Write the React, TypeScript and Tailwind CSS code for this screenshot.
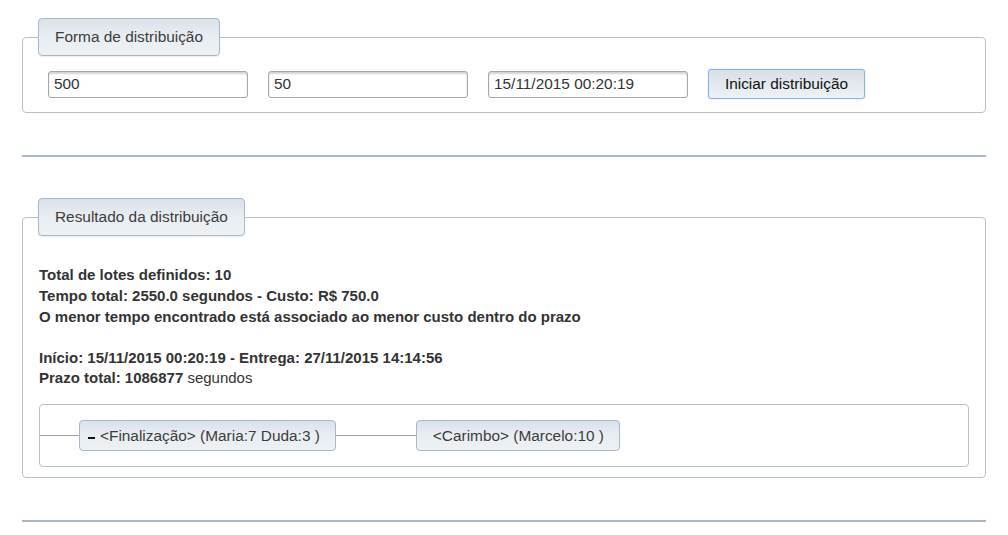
const font = { fontFamily: '"Liberation Sans", Arial, sans-serif' };

function Legend({ children }: { children: React.ReactNode }) {
  return (
    <legend className="ml-[15px] h-[38px] rounded-[4px] border border-[#a9b7c6] bg-gradient-to-b from-[#d9e1ea] via-[#e9eef2] to-[#edf1f4] px-[16px] text-[15.4px] leading-[36px] text-[#3c3c3c] shadow-[0_1px_1px_rgba(0,0,0,0.08)]">
      {children}
    </legend>
  );
}

function TextInput({ value }: { value: string }) {
  return (
    <input
      readOnly
      value={value}
      className="h-[27px] w-[200px] rounded-[3px] border border-[#a8a8a8] bg-white px-[5px] text-[15.4px] text-[#333] shadow-[inset_0_2px_2px_rgba(0,0,0,0.18)] outline-none"
    />
  );
}

function Node({ children, className = "" }: { children: React.ReactNode; className?: string }) {
  return (
    <div
      className={`flex h-[31px] items-center rounded-[4px] border border-[#a9b7c6] bg-gradient-to-b from-[#d9e1ea] via-[#e9eef2] to-[#edf1f4] pr-[15px] text-[15.4px] text-[#3c3c3c] ${className}`}
    >
      {children}
    </div>
  );
}

export default function App() {
  return (
    <div className="min-h-[535px] bg-white px-[22px] pt-[18px]" style={font}>
      <fieldset className="rounded-[4px] border border-[#b3c0cc] px-0 pb-[13px]">
        <Legend>Forma de distribuição</Legend>
        <div className="flex items-center gap-[20px] pl-[25px] pt-[13px]">
          <TextInput value="500" />
          <TextInput value="50" />
          <TextInput value="15/11/2015 00:20:19" />
          <button className="h-[30px] w-[157px] rounded-[3px] border border-[#88b0e6] bg-gradient-to-b from-[#d7dfe8] to-[#eef2f5] text-[15.4px] text-[#111] shadow-[0_0_1px_rgba(90,140,220,0.7)]">
            Iniciar distribuição
          </button>
        </div>
      </fieldset>

      <hr className="mt-[42px] border-0 border-t-2 border-[#a9b8c7]" />

      <fieldset className="mt-[41px] rounded-[4px] border border-[#b3c0cc] px-0 pb-[10px]">
        <Legend>Resultado da distribuição</Legend>
        <div className="px-[16px] pt-[28px] text-[15px] leading-[21px] text-[#333]">
          <div className="font-bold">
            <p>Total de lotes definidos: 10</p>
            <p>Tempo total: 2550.0 segundos - Custo: R$ 750.0</p>
            <p>O menor tempo encontrado está associado ao menor custo dentro do prazo</p>
            <p className="mt-[21px] leading-[20px]">Início: 15/11/2015 00:20:19 - Entrega: 27/11/2015 14:14:56</p>
            <p className="leading-[20px]">
              Prazo total: 1086877 <span className="font-normal">segundos</span>
            </p>
          </div>

          <div className="mt-[16px] flex items-center rounded-[4px] border border-[#b3c0cc] py-[15px]">
            <div className="h-px w-[39px] bg-[#a0a0a0]" />
            <Node className="pl-[8px]">
              <span className="mr-[5px] inline-block h-[2px] w-[7px] translate-y-[2px] bg-[#111]" />
              {"<Finalização> (Maria:7 Duda:3 )"}
            </Node>
            <div className="h-px w-[80px] bg-[#a0a0a0]" />
            <Node className="pl-[16px]">{"<Carimbo> (Marcelo:10 )"}</Node>
          </div>
        </div>
      </fieldset>

      <hr className="mt-[42px] border-0 border-t-2 border-[#a9b8c7]" />
    </div>
  );
}
